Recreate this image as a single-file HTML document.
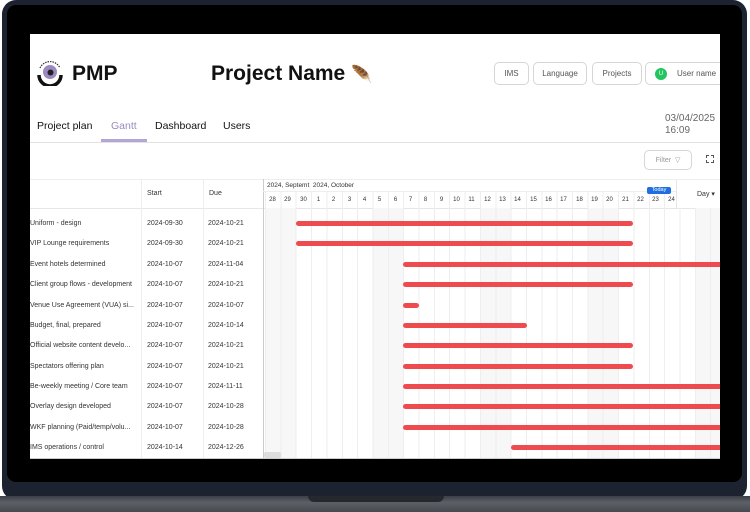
<!DOCTYPE html>
<html><head><meta charset="utf-8"><style>
*{margin:0;padding:0;box-sizing:border-box}
body{width:750px;height:512px;overflow:hidden;background:#fff;font-family:"Liberation Sans",sans-serif;position:relative}
.abs{position:absolute}
.frame{left:2px;top:0;width:745px;height:500px;background:#1c2230;border-radius:14px}
.bezel{left:7px;top:5px;width:735px;height:477px;background:#000;border-radius:9px}
.base{left:0;top:496px;width:750px;height:16px;background:linear-gradient(#3b3e44,#5d6066 40%,#46494e)}
.notch{left:308px;top:496px;width:136px;height:6px;background:#25282d;border-radius:0 0 8px 8px}
.screen{left:30px;top:34px;width:690px;height:425px;background:#fff;overflow:hidden}
.btn{position:absolute;top:28px;height:23px;border:1px solid #d6d6d6;border-radius:5px;font-size:8px;color:#555;display:flex;align-items:center;justify-content:center}
.tab{position:absolute;top:86px;font-size:10.5px;color:#111}
.t{position:absolute;font-size:7px;color:#333;white-space:nowrap}
.bar{position:absolute;height:4.5px;background:#ef4b4e;border-radius:3px}
.d{position:absolute;top:163px;font-size:6px;color:#333;width:15px;text-align:center}
</style></head><body>
<div class="abs frame"></div>
<div class="abs bezel"></div>
<div class="abs base"></div>
<div class="abs notch"></div>
<div class="abs screen">
 <svg class="abs" style="left:5px;top:22px" width="30" height="30" viewBox="0 0 30 30">
  <circle cx="15" cy="16" r="7" fill="#9a8ac0"/><circle cx="15.5" cy="16.5" r="3" fill="#222"/>
  <path d="M4 19 A11 11 0 0 0 26 19" stroke="#111" stroke-width="3.5" fill="none"/>
  <path d="M5 12 A11 11 0 0 1 25 12" stroke="#333" stroke-width="1.2" fill="none" stroke-dasharray="1.5 1"/>
 </svg>
 <div class="abs" style="left:42px;top:28px;font-size:21px;font-weight:bold;color:#111">PMP</div>
 <div class="abs" style="left:181px;top:28px;font-size:21px;font-weight:bold;color:#111">Project Name <span style="font-size:17px;color:#6b4b2a">🪶</span></div>
 <div class="btn" style="left:464px;width:35px">IMS</div>
 <div class="btn" style="left:503px;width:54px">Language</div>
 <div class="btn" style="left:562px;width:50px">Projects</div>
 <div class="btn" style="left:615px;width:80px;justify-content:flex-start;padding-left:9px"><span style="width:12px;height:12px;border-radius:50%;background:#22c55e;color:#fff;font-size:6px;display:inline-flex;align-items:center;justify-content:center;margin-right:10px">U</span>User name</div>
 <div class="tab" style="left:7px">Project plan</div>
 <div class="tab" style="left:81px;color:#9a8ac0">Gantt</div>
 <div class="abs" style="left:71px;top:105px;width:46px;height:3px;background:#b3a6d4"></div>
 <div class="tab" style="left:125px">Dashboard</div>
 <div class="tab" style="left:193px">Users</div>
 <div class="abs" style="left:635px;top:79px;font-size:10px;color:#666;line-height:12px">03/04/2025<br>16:09</div>
 <div class="abs" style="left:0;top:108px;width:690px;height:1px;background:#e2e2e2"></div>
 <div class="btn" style="left:614px;top:116px;width:48px;height:20px;color:#999;font-size:7px">Filter &nbsp;▽</div>
 <div class="abs" style="left:676px;top:121px;width:8px;height:8px;border:1.5px dashed #555"></div>
 <div class="abs" style="left:0;top:145px;width:690px;height:1px;background:#eee"></div>
 <div class="abs" style="left:0;top:174px;width:690px;height:1px;background:#e6e6e6"></div>
 <div class="abs" style="left:111px;top:145px;width:1px;height:280px;background:#eee"></div>
 <div class="abs" style="left:173px;top:145px;width:1px;height:280px;background:#eee"></div>
 <div class="abs" style="left:233px;top:145px;width:1px;height:280px;background:#ccc"></div>
 <div class="t" style="left:117px;top:156px">Start</div>
 <div class="t" style="left:179px;top:156px">Due</div>
 <div class="abs" style="left:235px;top:174px;width:455px;height:251px;background:
  repeating-linear-gradient(90deg,#eee 0 1px,transparent 1px 15.35px),
  repeating-linear-gradient(90deg,#f7f7f7 0 30.7px,transparent 30.7px 107.45px)"></div>
 <div class="abs" style="left:235px;top:157px;width:412px;height:17px;background:repeating-linear-gradient(90deg,#eee 0 1px,transparent 1px 15.35px)"></div>
 <div class="abs" style="left:646px;top:146px;width:1px;height:28px;background:#e6e6e6"></div>
 <div class="abs" style="left:233px;top:157px;width:413px;height:1px;background:#eee"></div>
 <div class="t" style="left:237px;top:148px;font-size:6.5px">2024, Septemt&nbsp; 2024, October</div>
 <div class="abs" style="left:617px;top:153px;width:24px;height:7px;background:#1f6fe0;border-radius:2px;color:#fff;font-size:5.5px;text-align:center;line-height:7px">Today</div>
 <div class="t" style="left:667px;top:156px;font-size:7px">Day ▾</div>
 <div class="d" style="left:235px">28</div><div class="d" style="left:250px">29</div><div class="d" style="left:266px">30</div><div class="d" style="left:281px">1</div><div class="d" style="left:296px">2</div><div class="d" style="left:312px">3</div><div class="d" style="left:327px">4</div><div class="d" style="left:342px">5</div><div class="d" style="left:358px">6</div><div class="d" style="left:373px">7</div><div class="d" style="left:388px">8</div><div class="d" style="left:404px">9</div><div class="d" style="left:419px">10</div><div class="d" style="left:434px">11</div><div class="d" style="left:450px">12</div><div class="d" style="left:465px">13</div><div class="d" style="left:480px">14</div><div class="d" style="left:496px">15</div><div class="d" style="left:511px">16</div><div class="d" style="left:526px">17</div><div class="d" style="left:542px">18</div><div class="d" style="left:557px">19</div><div class="d" style="left:572px">20</div><div class="d" style="left:588px">21</div><div class="d" style="left:603px">22</div><div class="d" style="left:618px">23</div><div class="d" style="left:634px">24</div>
 <div class="t" style="left:0;top:186px">Uniform - design</div><div class="t" style="left:117px;top:186px">2024-09-30</div><div class="t" style="left:178px;top:186px">2024-10-21</div>
 <div class="t" style="left:0;top:206px">VIP Lounge requirements</div><div class="t" style="left:117px;top:206px">2024-09-30</div><div class="t" style="left:178px;top:206px">2024-10-21</div>
 <div class="t" style="left:0;top:227px">Event hotels determined</div><div class="t" style="left:117px;top:227px">2024-10-07</div><div class="t" style="left:178px;top:227px">2024-11-04</div>
 <div class="t" style="left:0;top:247px">Client group flows - development</div><div class="t" style="left:117px;top:247px">2024-10-07</div><div class="t" style="left:178px;top:247px">2024-10-21</div>
 <div class="t" style="left:0;top:268px">Venue Use Agreement (VUA) si...</div><div class="t" style="left:117px;top:268px">2024-10-07</div><div class="t" style="left:178px;top:268px">2024-10-07</div>
 <div class="t" style="left:0;top:288px">Budget, final, prepared</div><div class="t" style="left:117px;top:288px">2024-10-07</div><div class="t" style="left:178px;top:288px">2024-10-14</div>
 <div class="t" style="left:0;top:308px">Official website content develo...</div><div class="t" style="left:117px;top:308px">2024-10-07</div><div class="t" style="left:178px;top:308px">2024-10-21</div>
 <div class="t" style="left:0;top:329px">Spectators offering plan</div><div class="t" style="left:117px;top:329px">2024-10-07</div><div class="t" style="left:178px;top:329px">2024-10-21</div>
 <div class="t" style="left:0;top:349px">Be-weekly meeting / Core team</div><div class="t" style="left:117px;top:349px">2024-10-07</div><div class="t" style="left:178px;top:349px">2024-11-11</div>
 <div class="t" style="left:0;top:369px">Overlay design developed</div><div class="t" style="left:117px;top:369px">2024-10-07</div><div class="t" style="left:178px;top:369px">2024-10-28</div>
 <div class="t" style="left:0;top:390px">WKF planning (Paid/temp/volu...</div><div class="t" style="left:117px;top:390px">2024-10-07</div><div class="t" style="left:178px;top:390px">2024-10-28</div>
 <div class="t" style="left:0;top:410px">IMS operations / control</div><div class="t" style="left:117px;top:410px">2024-10-14</div><div class="t" style="left:178px;top:410px">2024-12-26</div>
 <div class="bar" style="left:266px;width:337px;top:187px"></div>
 <div class="bar" style="left:266px;width:337px;top:207px"></div>
 <div class="bar" style="left:373px;width:330px;top:228px"></div>
 <div class="bar" style="left:373px;width:230px;top:248px"></div>
 <div class="bar" style="left:373px;width:16px;top:269px"></div>
 <div class="bar" style="left:373px;width:124px;top:289px"></div>
 <div class="bar" style="left:373px;width:230px;top:309px"></div>
 <div class="bar" style="left:373px;width:230px;top:330px"></div>
 <div class="bar" style="left:373px;width:330px;top:350px"></div>
 <div class="bar" style="left:373px;width:330px;top:370px"></div>
 <div class="bar" style="left:373px;width:330px;top:391px"></div>
 <div class="bar" style="left:481px;width:220px;top:411px"></div>
 <div class="abs" style="left:234px;top:418px;width:17px;height:6px;background:#ddd;border-radius:2px"></div>
 <div class="abs" style="left:0;top:424px;width:690px;height:1px;background:#ccc"></div>
</div>
</body></html>
